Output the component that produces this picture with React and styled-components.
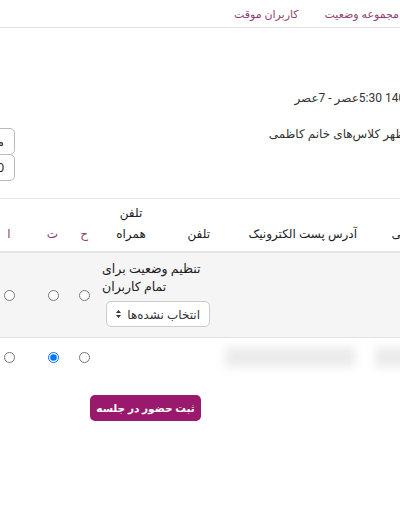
import React from "react";
import styled, { createGlobalStyle } from "styled-components";

const GlobalStyle = createGlobalStyle`
  body {
    margin: 0;
    background: #fff;
    direction: rtl;
    overflow: hidden;
    font-family: "Noto Sans", "DejaVu Sans", sans-serif;
    color: #1d2125;
  }
`;

const Page = styled.div`
  width: 480px;
  margin-right: -60px;
  height: 516px;
`;

const NavBar = styled.div`
  display: flex;
  height: 27px;
  align-items: center;
  border-bottom: 1px solid #e3e3e3;
  padding-right: 48px;
`;

const NavItem = styled.a`
  font-size: 11px;
  color: #8f3f73;
  padding: 0 13px;
  text-decoration: none;
  white-space: nowrap;
`;

const Info = styled.div`
  display: flex;
  justify-content: space-between;
  padding-top: 63px;
  height: 107px;
`;

const InfoText = styled.div`
  display: flex;
  flex-direction: column;
  gap: 20px;
  font-size: 12px;
  color: #333;
  white-space: nowrap;
  margin-right: 6px;
`;

const DateLine = styled.div`
  font-family: Roboto, "DejaVu Sans", sans-serif;
`;

const Tools = styled.div`
  display: flex;
  flex-direction: column;
  align-items: flex-start;
  padding-top: 37px;
`;

const ToolBox = styled.div`
  box-sizing: border-box;
  width: ${(p) => p.$w}px;
  height: 27px;
  border: 1px solid #bbb;
  border-radius: 5px;
  font-size: 12px;
  line-height: 25px;
  padding-right: 10px;
  overflow: hidden;
  white-space: nowrap;
  margin-top: ${(p) => (p.$first ? 0 : -1)}px;
`;

const Table = styled.table`
  border-collapse: collapse;
  table-layout: fixed;
  width: 480px;
  border-top: 1px solid #e6e6e6;
`;

const Th = styled.th`
  height: 45px;
  vertical-align: bottom;
  padding: 0 ${(p) => (p.$pr !== undefined ? p.$pr : 10)}px 7px 10px;
  font-size: 12px;
  font-weight: normal;
  line-height: 21px;
  text-align: ${(p) => p.$align || "right"};
  color: ${(p) => (p.$status ? "#8f3f73" : "#1d2125")};
  border-bottom: 2px solid #e3e3e3;
  white-space: ${(p) => (p.$wrap ? "normal" : "nowrap")};
  overflow: hidden;
`;

const Row = styled.tr`
  background: ${(p) => (p.$shade ? "#f5f5f5" : "#fff")};
  border-bottom: ${(p) => (p.$shade ? "1px solid #e3e3e3" : "none")};
`;

const Td = styled.td`
  height: ${(p) => p.$h}px;
  padding: 0;
  text-align: center;
  vertical-align: middle;
`;

const SetAll = styled.td`
  padding: 7px 10px 10px 2px;
  vertical-align: top;
`;

const SetText = styled.div`
  font-size: 12.5px;
  line-height: 18px;
  text-align: left;
  color: #1d2125;
`;

const Select = styled.div`
  box-sizing: border-box;
  width: 104px;
  height: 26px;
  margin: 5px 0 0 auto;
  border: 1px solid #ccc;
  border-radius: 5px;
  background: #fff;
  display: flex;
  align-items: center;
  justify-content: space-between;
  padding: 0 9px 0 8px;
  font-size: 12px;
  color: #333;
`;

const Radio = styled.input.attrs({ type: "radio" })`
  margin: 0;
  width: 11px;
  height: 11px;
`;

const Blur = styled.div`
  height: 20px;
  background: #ebebeb;
  filter: blur(5px);
  margin: ${(p) => p.$m};
`;

const Actions = styled.div`
  display: flex;
  padding: 19px 259px 0 0;
`;

const SubmitButton = styled.button`
  width: 111px;
  height: 26px;
  border: none;
  border-radius: 5px;
  background: #99196d;
  color: #fff;
  font-family: "Noto Sans", "DejaVu Sans", sans-serif;
  font-size: 10.5px;
  font-weight: bold;
  padding: 0;
`;

const Arrows = () => (
  <svg width="7" height="10" viewBox="0 0 7 10">
    <path d="M3.5 1 L6 4 H1 Z M3.5 9 L6 6 H1 Z" fill="#333" />
  </svg>
);

export default function App() {
  return (
    <>
      <GlobalStyle />
      <Page>
        <NavBar>
          <NavItem>مجموعه وضعیت</NavItem>
          <NavItem>کاربران موقت</NavItem>
        </NavBar>
        <Info>
          <InfoText>
            <DateLine>پنجشنبه 1401 5:30عصر - 7عصر</DateLine>
            <div>جلسه روزظهر کلاس‌های خانم کاظمی</div>
          </InfoText>
          <Tools>
            <ToolBox $w={35} $first>مرتب‌سازی</ToolBox>
            <ToolBox $w={33}>0</ToolBox>
          </Tools>
        </Info>
        <Table>
          <colgroup>
            <col style={{ width: 93 }} />
            <col style={{ width: 147 }} />
            <col style={{ width: 58 }} />
            <col style={{ width: 62 }} />
            <col style={{ width: 32 }} />
            <col style={{ width: 30 }} />
            <col style={{ width: 58 }} />
          </colgroup>
          <thead>
            <tr>
              <Th $pr={6}>نام خانوادگی</Th>
              <Th>آدرس پست الکترونیک</Th>
              <Th>تلفن</Th>
              <Th $wrap $align="center">تلفن همراه</Th>
              <Th $status $align="center">ح</Th>
              <Th $status $align="center">ت</Th>
              <Th $status $align="center">ا</Th>
            </tr>
          </thead>
          <tbody>
            <Row $shade>
              <Td $h={84} />
              <Td />
              <SetAll colSpan={2}>
                <SetText>تنظیم وضعیت برای تمام کاربران</SetText>
                <Select>
                  <span>انتخاب نشده‌ها</span>
                  <Arrows />
                </Select>
              </SetAll>
              <Td><Radio name="all" /></Td>
              <Td><Radio name="all" /></Td>
              <Td><Radio name="all" /></Td>
            </Row>
            <Row>
              <Td $h={38}><Blur $m="0 0 0 8px" /></Td>
              <Td><Blur $m="0 12px 0 5px" /></Td>
              <Td />
              <Td />
              <Td><Radio name="u1" /></Td>
              <Td><Radio name="u1" defaultChecked /></Td>
              <Td><Radio name="u1" /></Td>
            </Row>
          </tbody>
        </Table>
        <Actions>
          <SubmitButton>ثبت حضور در جلسه</SubmitButton>
        </Actions>
      </Page>
    </>
  );
}
